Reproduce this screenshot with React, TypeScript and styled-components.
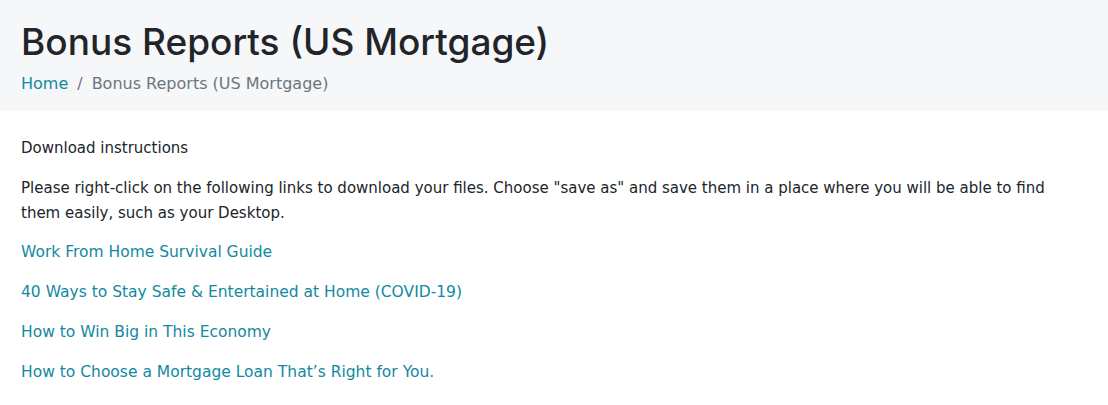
import styled, { createGlobalStyle } from "styled-components";

const GlobalStyle = createGlobalStyle`
  body {
    margin: 0;
    background: #fff;
    font-family: "DejaVu Sans", sans-serif;
    color: #212529;
  }
`;

const Header = styled.header`
  background: #f6f7f9;
  height: 111px;
  padding: 18px 21px 0;
  box-sizing: border-box;
`;

const Title = styled.h1`
  margin: 0;
  font-family: Inter, "Liberation Sans", sans-serif;
  font-weight: 500;
  font-size: 37px;
  line-height: 48px;
  color: #212529;
`;

const Crumbs = styled.nav`
  display: flex;
  align-items: center;
  gap: 9px;
  margin-top: 6px;
  font-size: 16px;
  line-height: 24px;
  color: #6c757d;
`;

const Link = styled.a`
  color: #1289a1;
  text-decoration: none;
`;

const Sep = styled.span`
  color: #6c757d;
`;

const Main = styled.main`
  padding: 25px 21px 0;
  font-size: 15px;
  line-height: 25px;
`;

const Para = styled.p<{ $gap?: number }>`
  margin: 0 0 ${({ $gap = 15 }) => $gap}px;
`;

const Links = styled.div`
  display: flex;
  flex-direction: column;
  align-items: flex-start;
  gap: 15px;
  font-size: 15.5px;
`;

const reports = [
  "Work From Home Survival Guide",
  "40 Ways to Stay Safe & Entertained at Home (COVID-19)",
  "How to Win Big in This Economy",
  "How to Choose a Mortgage Loan That’s Right for You.",
];

export default function App() {
  return (
    <>
      <GlobalStyle />
      <Header>
        <Title>Bonus Reports (US Mortgage)</Title>
        <Crumbs>
          <Link href="#">Home</Link>
          <Sep>/</Sep>
          <span>Bonus Reports (US Mortgage)</span>
        </Crumbs>
      </Header>
      <Main>
        <Para>Download instructions</Para>
        <Para $gap={14}>
          Please right-click on the following links to download your files. Choose "save as" and save them in a place
          where you will be able to find them easily, such as your Desktop.
        </Para>
        <Links>
          {reports.map((r) => (
            <Link key={r} href="#">
              {r}
            </Link>
          ))}
        </Links>
      </Main>
    </>
  );
}
